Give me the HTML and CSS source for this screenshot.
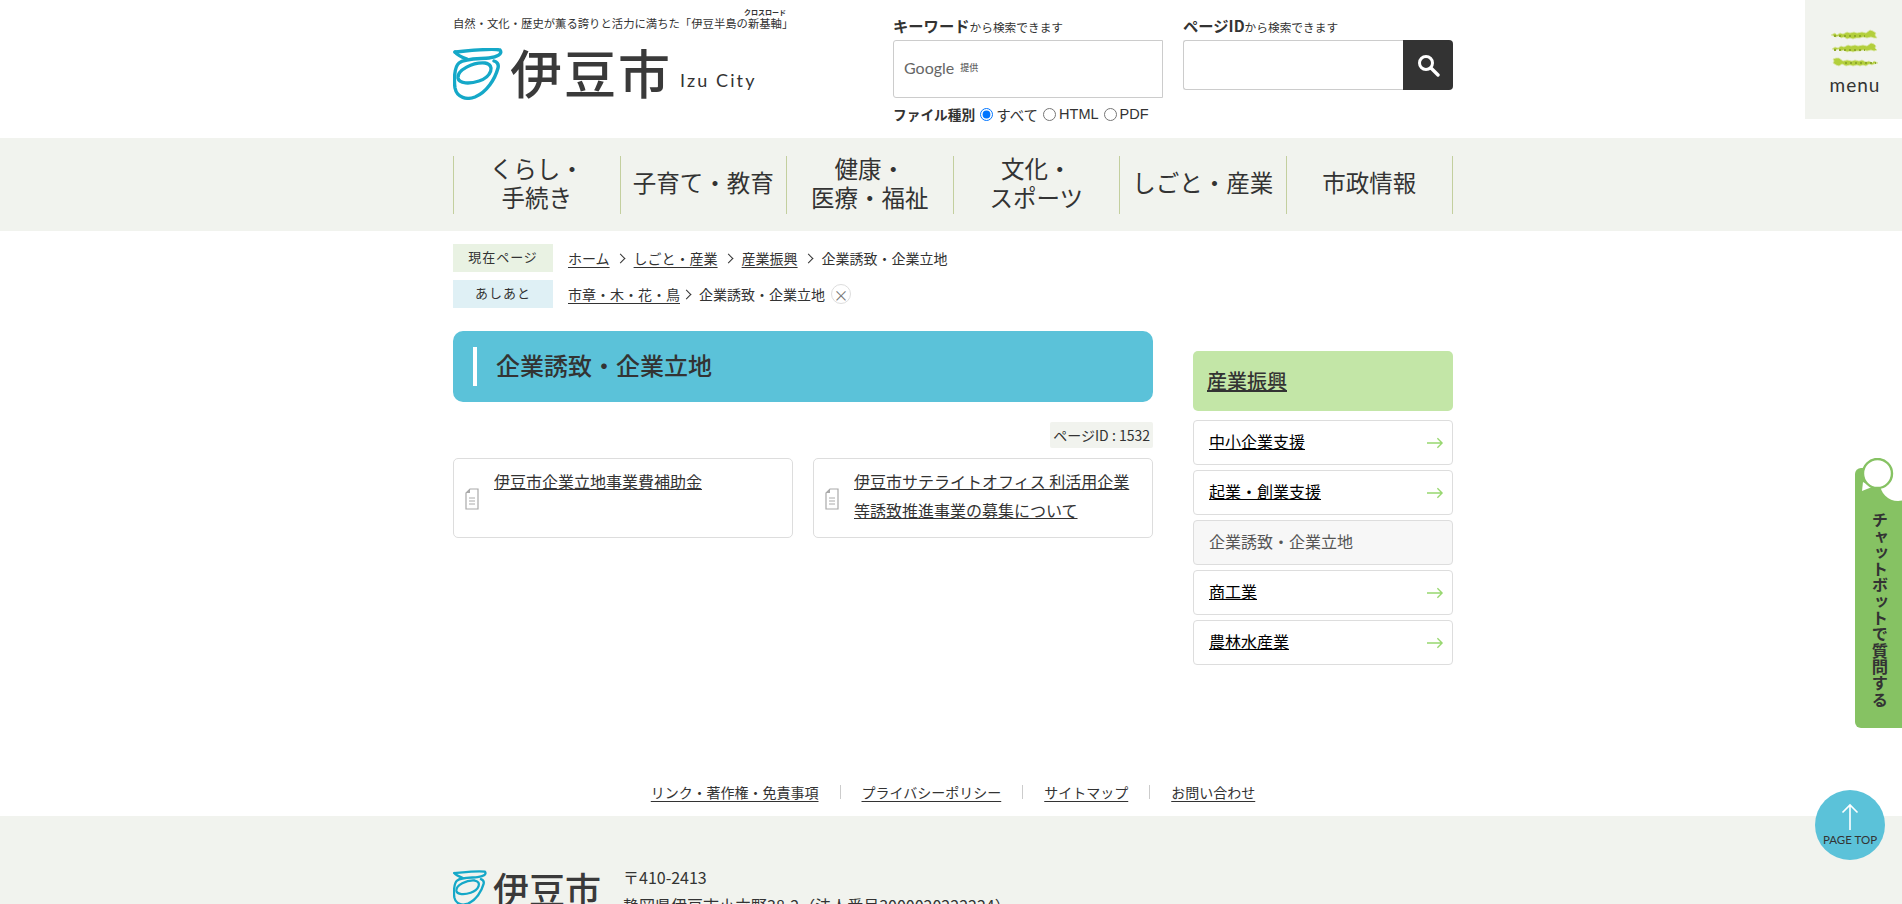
FILE: index.html
```html
<!DOCTYPE html>
<html lang="ja">
<head>
<meta charset="utf-8">
<title>企業誘致・企業立地 | 伊豆市</title>
<link rel="stylesheet" href="styles.css">
</head>
<body>
<div class="page">
  <header class="site-header">
    <div class="brand">
      <p class="tagline">自然・文化・歴史が薫る誇りと活力に満ちた「伊豆半島の<span class="rb">新基軸<span class="rt">クロスロード</span></span>」</p>
      <div class="logo">
        <svg class="logo-mark" viewBox="0 0 50 52" aria-hidden="true"><g fill="none" stroke="#15a8c8" stroke-width="3.400" stroke-linecap="round" stroke-linejoin="round"><path d="M2 4C14 3 38 0 47 2c3 4-3 7-11 8-8 1-24 0-30 5-5 4-5 18-4 25 2 10 12 12 20 9 12-5 20-18 23-29 1-4-1-6-4-7"/><path d="M2 4c3 4 9 6 12 7"/><path d="M5 30c-1-8 15-16 27-15 11 2 6 14-6 18-9 3-20 3-21-3z"/></g></svg>
        <span class="logo-name">伊豆市</span>
        <span class="logo-en">Izu City</span>
      </div>
    </div>
    <div class="search-col">
      <p class="search-label"><b>キーワード</b>から検索できます</p>
      <div class="search-box search-box-google"><span class="google">Google</span><span class="google-by">提供</span></div>
      <div class="filetype">
        <b>ファイル種別</b>
        <label class="radio"><input type="radio" name="ft" checked>すべて</label>
        <label class="radio"><input type="radio" name="ft">HTML</label>
        <label class="radio"><input type="radio" name="ft">PDF</label>
      </div>
    </div>
    <div class="search-col">
      <p class="search-label"><b>ページID</b>から検索できます</p>
      <div class="id-search">
        <div class="id-input"></div>
        <div class="id-button"><svg viewBox="0 0 24 24" width="24" height="24" aria-hidden="true"><circle cx="10" cy="10" r="6.5" fill="none" stroke="#fff" stroke-width="3"/><path d="M15 15l7 7" stroke="#fff" stroke-width="3.4" stroke-linecap="round"/></svg></div>
      </div>
    </div>
  </header>

  <div class="menu-btn">
    <svg class="wasabi" viewBox="0 0 48 38" aria-hidden="true">
      <path class="w1" d="M0 5l4-2 2 2 3-2 3 1 4-2 3 1 4-1 3 1 5-1 4 1 4-3 3 1 3 2-1 2 2 3-3 0-3-1-4 1-4-1-3 1-4 0-3 1-3-1-3 1-3-2-3 1-2-2-3 1z"/>
      <path class="w2" d="M3 6h31"/>
      <path class="w1" d="M1 19l3-2 3 1 3-2 3 1 4-2 3 1 4-1 3 1 5-1 4 1 4-3 3 1 2 2-1 2 2 2-3 1-3-1-4 1-4-1-3 1-4 0-3 1-3-1-3 1-3-2-3 1-2-2-3 1z"/>
      <path class="w2" d="M3 20h31"/>
      <path class="w1" d="M47 33l-4-2-2 2-3-2-3 1-4-2-3 1-4-1-3 1-5-1-4 1-4-3-3 0-3 1 1 2-1 2 3 2 3 1 3-2 4 2 4-1 3 1 4-1 3 1 3-1 3 1 3-2 3 1 2-1z"/>
      <path class="w2" d="M14 33h31"/>
    </svg>
    <span class="menu-label">menu</span>
  </div>

  <nav class="gnav">
    <ul class="gnav-list">
      <li class="gnav-item">くらし・<br>手続き</li>
      <li class="gnav-item">子育て・教育</li>
      <li class="gnav-item">健康・<br>医療・福祉</li>
      <li class="gnav-item">文化・<br>スポーツ</li>
      <li class="gnav-item">しごと・産業</li>
      <li class="gnav-item">市政情報</li>
    </ul>
  </nav>

  <div class="crumbs">
    <div class="crumb-row">
      <span class="crumb-label crumb-now">現在ページ</span>
      <span class="crumb-path"><a href="#">ホーム</a><i class="sep"></i><a href="#">しごと・産業</a><i class="sep"></i><a href="#">産業振興</a><i class="sep"></i>企業誘致・企業立地</span>
    </div>
    <div class="crumb-row">
      <span class="crumb-label crumb-trail">あしあと</span>
      <span class="crumb-path crumb-path-tight"><a href="#">市章・木・花・鳥</a><i class="sep"></i>企業誘致・企業立地<span class="close">×</span></span>
    </div>
  </div>

  <main class="main">
    <div class="content">
      <h1 class="title">企業誘致・企業立地</h1>
      <div class="pageid-row"><span class="pageid">ページID : 1532</span></div>
      <div class="cards">
        <div class="card">
          <svg class="doc" viewBox="0 0 14 22" aria-hidden="true"><path d="M5 1h8v20H1V5z" fill="#fff" stroke="#aaa" stroke-width="1.2"/><path d="M5 1v4H1z" fill="#aaa"/><path d="M4 10h6M4 13h6M4 16h6" stroke="#aaa"/></svg>
          <a href="#">伊豆市企業立地事業費補助金</a>
        </div>
        <div class="card">
          <svg class="doc" viewBox="0 0 14 22" aria-hidden="true"><path d="M5 1h8v20H1V5z" fill="#fff" stroke="#aaa" stroke-width="1.2"/><path d="M5 1v4H1z" fill="#aaa"/><path d="M4 10h6M4 13h6M4 16h6" stroke="#aaa"/></svg>
          <a href="#">伊豆市サテライトオフィス 利活用企業等誘致推進事業の募集について</a>
        </div>
      </div>
    </div>
    <aside class="side">
      <h2 class="side-head"><a href="#">産業振興</a></h2>
      <ul class="side-list">
        <li class="side-item"><a href="#">中小企業支援</a><svg class="arrow" viewBox="0 0 18 12" aria-hidden="true"><path d="M0 6h16M11 1l5 5-5 5" fill="none" stroke="#97d76f" stroke-width="1.4"/></svg></li>
        <li class="side-item"><a href="#">起業・創業支援</a><svg class="arrow" viewBox="0 0 18 12" aria-hidden="true"><path d="M0 6h16M11 1l5 5-5 5" fill="none" stroke="#97d76f" stroke-width="1.4"/></svg></li>
        <li class="side-item side-current">企業誘致・企業立地</li>
        <li class="side-item"><a href="#">商工業</a><svg class="arrow" viewBox="0 0 18 12" aria-hidden="true"><path d="M0 6h16M11 1l5 5-5 5" fill="none" stroke="#97d76f" stroke-width="1.4"/></svg></li>
        <li class="side-item"><a href="#">農林水産業</a><svg class="arrow" viewBox="0 0 18 12" aria-hidden="true"><path d="M0 6h16M11 1l5 5-5 5" fill="none" stroke="#97d76f" stroke-width="1.4"/></svg></li>
      </ul>
    </aside>
  </main>

  <ul class="foot-links">
    <li class="foot-link"><a href="#">リンク・著作権・免責事項</a></li>
    <li class="foot-link"><a href="#">プライバシーポリシー</a></li>
    <li class="foot-link"><a href="#">サイトマップ</a></li>
    <li class="foot-link"><a href="#">お問い合わせ</a></li>
  </ul>

  <footer class="footer">
    <div class="footer-inner">
      <div class="logo logo-small">
        <svg class="logo-mark" viewBox="0 0 50 52" aria-hidden="true"><g fill="none" stroke="#15a8c8" stroke-width="3.400" stroke-linecap="round" stroke-linejoin="round"><path d="M2 4C14 3 38 0 47 2c3 4-3 7-11 8-8 1-24 0-30 5-5 4-5 18-4 25 2 10 12 12 20 9 12-5 20-18 23-29 1-4-1-6-4-7"/><path d="M2 4c3 4 9 6 12 7"/><path d="M5 30c-1-8 15-16 27-15 11 2 6 14-6 18-9 3-20 3-21-3z"/></g></svg>
        <span class="logo-name">伊豆市</span>
      </div>
      <address class="address">〒410-2413<br>静岡県伊豆市小立野38-2（法人番号3000020222224）</address>
    </div>
  </footer>

  <div class="chat">
    <svg class="chat-icon" viewBox="0 0 47 46" aria-hidden="true"><circle cx="43" cy="25" r="18" fill="#fff"/><path d="M8 24l-1 9 10-4z" fill="#fff"/><circle cx="22.500" cy="15.500" r="14.500" fill="#fff" stroke="#86c263" stroke-width="2.400"/></svg>
    <span class="chat-text">チャットボットで質問する</span>
  </div>

  <div class="pagetop">
    <svg viewBox="0 0 18 28" width="18" height="28" aria-hidden="true"><path d="M9 27V2M1.500 9.500L9 2l7.500 7.500" fill="none" stroke="#fff" stroke-width="1.600"/></svg>
    <span class="pagetop-text">PAGE TOP</span>
  </div>
</div>
</body>
</html>
```
FILE: styles.css
```css
* { box-sizing: border-box; }
html, body { margin: 0; padding: 0; }
body {
  font-family: "Noto Sans CJK JP", "Noto Sans", sans-serif;
  color: #333;
  background: #fff;
}
a { color: #333; }
ul, p, h1, h2 { margin: 0; padding: 0; }
ul { list-style: none; }
.page { position: relative; height: 904px; overflow: hidden; }

.site-header { width: 1000px; height: 138px; margin-left: 453px; display: flex; }
.brand { width: 440px; padding-top: 9px; }
.tagline { font-size: 11.350px; line-height: 28px; height: 35px; white-space: nowrap; }
.rb { position: relative; }
.rt { position: absolute; left: -4px; top: -7px; font-size: 7px; line-height: 8px; font-weight: 700; white-space: nowrap; }
.logo { display: flex; align-items: center; }
.logo-mark { width: 50px; height: 52px; flex: none; margin-top: 4px; }
.logo-name { font-size: 52px; line-height: 52px; margin-left: 7px; font-weight: 500; letter-spacing: 2px; color: #3a3a3a; }
.logo-en { font-family: Lato, sans-serif; font-size: 18px; letter-spacing: 2.100px; margin: 16px 0 0 8px; white-space: nowrap; }
.logo-small .logo-mark { width: 34px; height: 38px; margin-top: 0; }
.logo-small .logo-name { font-size: 36px; line-height: 38px; margin-left: 6px; letter-spacing: 0; }

.search-col { width: 270px; margin-right: 20px; padding-top: 15px; }
.search-col:last-of-type { margin-right: 0; }
.search-label { font-size: 11.700px; line-height: 20px; height: 25px; white-space: nowrap; }
.search-label b { font-size: 15.300px; font-weight: 700; }
.search-box { height: 58px; border: 1px solid #ccc; border-radius: 3px 0 0 3px; display: flex; align-items: center; padding: 0 0 3px 10px; }
.google { font-family: Lato, sans-serif; font-size: 16px; color: #666; }
.google-by { font-size: 9px; color: #666; margin-left: 6px; font-weight: 500; }
.filetype { display: flex; align-items: center; font-size: 14.500px; height: 20px; margin-top: 6px; white-space: nowrap; font-family: "Liberation Sans", "Noto Sans CJK JP", sans-serif; }
.filetype b { font-family: "Noto Sans CJK JP", sans-serif; font-size: 13.700px; margin-right: 5px; }
.radio { display: flex; align-items: center; margin-right: 5px; }
.radio input { width: 13px; height: 13px; margin: 0 3px 0 0; }
.id-search { display: flex; height: 50px; }
.id-input { flex: 1; border: 1px solid #ccc; border-right: 0; border-radius: 3px 0 0 3px; }
.id-button { width: 50px; background: #333; border-radius: 0 4px 4px 0; display: flex; align-items: center; justify-content: center; }

.menu-btn { position: absolute; top: 0; right: 0; width: 97px; height: 119px; background: #f1f3ee; display: flex; flex-direction: column; align-items: center; padding: 28px 0 0 3px; }
.wasabi { width: 48px; height: 42px; }
.w1 { fill: #b3cf3c; stroke: #dbe6a8; stroke-width: .8; }
.w2 { fill: none; stroke: #8fa82c; stroke-width: 2; stroke-dasharray: 2 3; }
.menu-label { font-family: Lato, sans-serif; font-size: 19px; line-height: 22px; letter-spacing: 1px; margin-top: 4px; color: #333; }

.gnav { background: #f1f3ee; height: 93px; padding-top: 18px; }
.gnav-list { width: 1000px; height: 58px; margin-left: 453px; display: grid; grid-template-columns: repeat(6, 1fr); grid-template-rows: 58px; border-right: 1px solid #c3cf9e; }
.gnav-item { border-left: 1px solid #c3cf9e; display: flex; align-items: center; justify-content: center; text-align: center; font-size: 23.500px; line-height: 29px; font-weight: 400; white-space: nowrap; color: #333; padding-bottom: 5px; }

.crumbs { width: 1000px; margin: 13px 0 0 453px; display: flex; flex-direction: column; gap: 8px; }
.crumb-row { display: flex; gap: 15px; height: 28px; font-size: 14px; }
.crumb-label { width: 100px; font-size: 13px; line-height: 26px; padding-bottom: 2px; text-align: center; letter-spacing: 1px; }
.crumb-now { background: #e9f2e3; }
.crumb-trail { background: #dff0f5; }
.crumb-path { line-height: 30px; display: flex; align-items: center; white-space: nowrap; }
.crumb-path a { text-underline-offset: 3px; }
.sep { width: 7px; height: 7px; border-top: 1.500px solid #333; border-right: 1.500px solid #333; transform: rotate(45deg); margin: 0 10px 0 7px; }
.crumb-path-tight .sep { margin: 0 9px 0 3px; }
.close { width: 20px; height: 20px; margin-left: 6px; border: 1px solid #ddd; border-radius: 50%; display: flex; align-items: center; justify-content: center; color: #777; font-size: 15px; line-height: 1; }

.main { width: 1000px; margin: 23px 0 0 453px; display: flex; gap: 40px; height: 453px; }
.content { width: 700px; }
.title { height: 71px; background: #5bc2d9; border-radius: 10px; font-size: 24px; line-height: 67px; font-weight: 500; padding-left: 43px; position: relative; }
.title::before { content: ""; position: absolute; left: 20px; top: 16px; width: 4px; height: 39px; background: #fff; }
.pageid-row { display: flex; justify-content: flex-end; margin-top: 20px; }
.pageid { height: 26px; background: #f1f3ee; font-size: 14px; line-height: 26px; padding: 0 3px; border-radius: 2px; white-space: nowrap; }
.cards { display: grid; grid-template-columns: 340px 340px; gap: 20px; margin-top: 10px; }
.card { height: 80px; border: 1px solid #ddd; border-radius: 5px; display: flex; padding: 8px 20px 0 40px; font-size: 16px; line-height: 29px; position: relative; }
.doc { position: absolute; left: 11px; top: 29px; width: 14px; height: 22px; }

.side { width: 260px; padding-top: 20px; }
.side-head { height: 60px; background: #c3e6a7; border-radius: 5px; padding-left: 14px; font-size: 20px; line-height: 60px; font-weight: 500; }
.side-list { margin-top: 9px; display: flex; flex-direction: column; gap: 5px; }
.side-item { height: 45px; border: 1px solid #ddd; border-radius: 4px; padding: 0 0 3px 15px; font-size: 16px; line-height: 38px; display: flex; justify-content: space-between; align-items: center; color: #000; }
.side-item a { color: #000; }
.side-current { background: #f7f7f7; color: #555; }
.arrow { width: 17px; height: 12px; margin: 3px 8px 0 0; }

.foot-links { display: flex; justify-content: center; height: 32px; padding-left: 4px; font-size: 14px; }
.foot-link { padding: 0 21px; border-left: 1px solid #ccc; height: 14px; line-height: 14px; margin-top: 1px; white-space: nowrap; }
.foot-link:first-child { border-left: 0; }
.foot-link a { text-underline-offset: 3px; }

.footer { background: #f1f3ee; height: 200px; padding-top: 41px; }
.footer-inner { width: 1000px; margin-left: 453px; display: flex; gap: 22px; }
.address { font-style: normal; font-size: 16px; line-height: 28px; padding-top: 6px; white-space: nowrap; }

.chat { position: absolute; top: 458px; right: 0; width: 47px; height: 270px; display: flex; justify-content: center; }
.chat::before { content: ""; position: absolute; left: 0; right: 0; top: 10px; bottom: 0; background: #86c263; border-radius: 6px 0 0 6px; }
.chat-icon { position: absolute; left: 0; top: 0; width: 47px; height: 46px; }
.chat-text { position: relative; writing-mode: vertical-rl; font-size: 16.300px; font-weight: 700; line-height: 47px; padding-top: 54px; padding-left: 2px; white-space: nowrap; }

.pagetop { position: absolute; left: 1815px; top: 790px; width: 70px; height: 70px; border-radius: 50%; background: #5bc2d9; display: flex; flex-direction: column; align-items: center; padding-top: 13px; }
.pagetop svg { display: block; }
.pagetop-text { font-family: Lato, sans-serif; font-size: 11.500px; line-height: 14px; margin-top: 2px; white-space: nowrap; color: #333; }
```
